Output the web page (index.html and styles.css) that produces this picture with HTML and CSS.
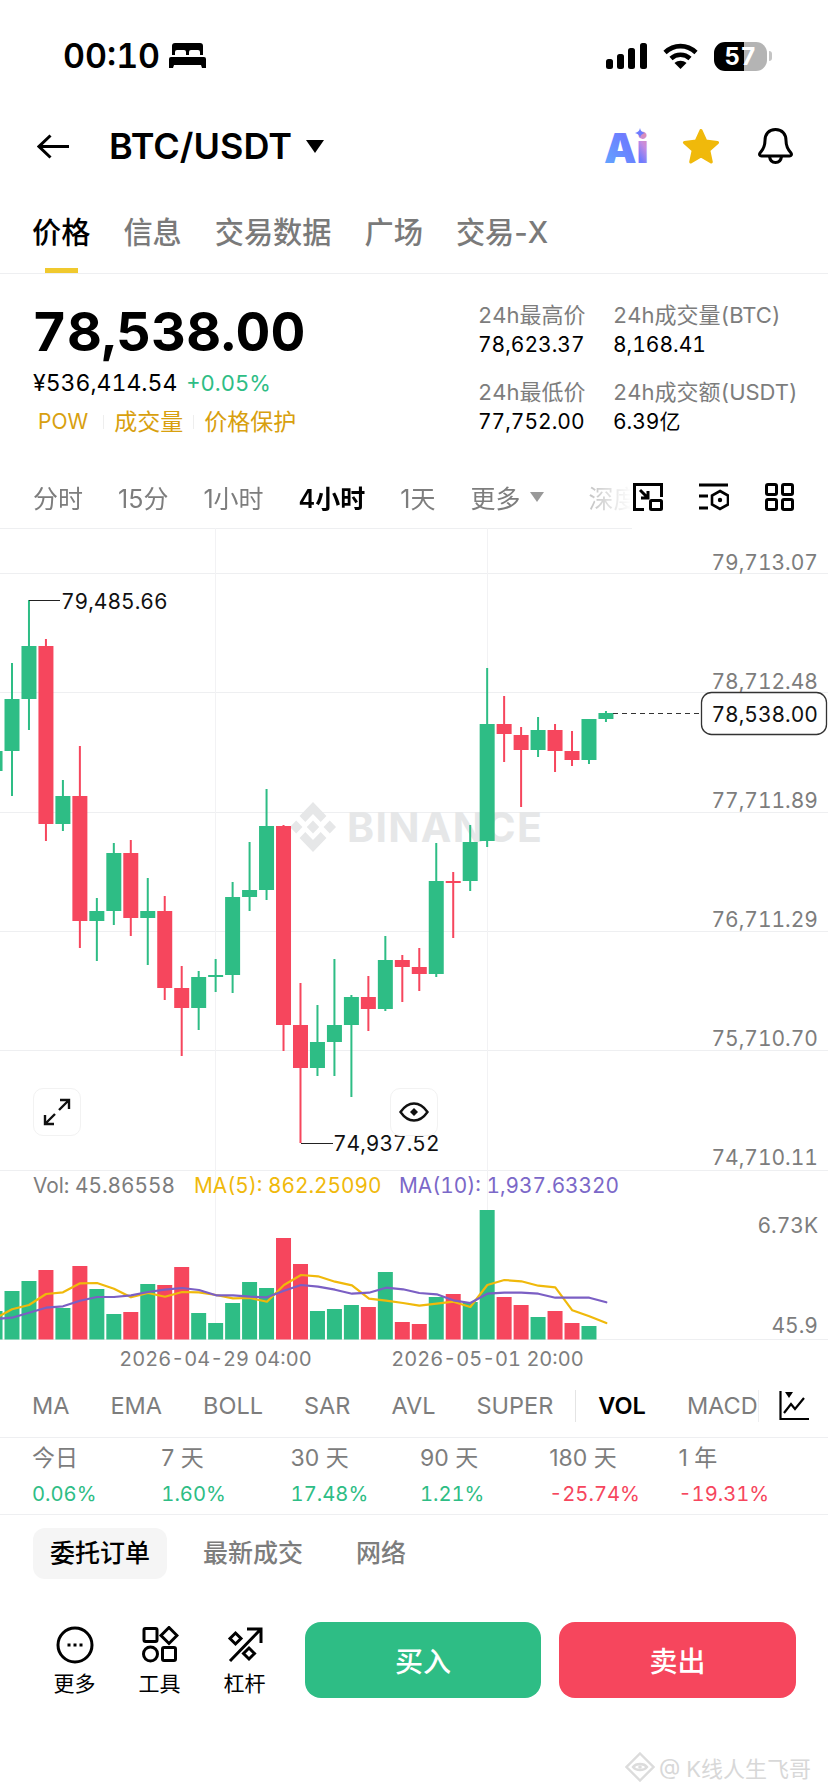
FILE: index.html
```html
<!DOCTYPE html>
<html lang="zh-CN">
<head>
    <meta charset="UTF-8">
    <meta name="viewport" content="width=device-width, initial-scale=1.0">
    <title>BTC/USDT</title>
    <link rel="stylesheet" href="styles.css">
</head>
<body>
<div class="page">

    <!-- 状态栏 -->
    <div class="status">
        <div class="status-left">
            <span class="clock">00:10</span>
            <svg width="37" height="25" viewBox="0 0 37 25"><path fill-rule="evenodd" d="M6 0h25a3 3 0 0 1 3 3v9h-3V9a2 2 0 0 0-2-2h-7a2 2 0 0 0-2 2v3h-3V9a2 2 0 0 0-2-2H8a2 2 0 0 0-2 2v3H3V3a3 3 0 0 1 3-3zM2 14h33a2 2 0 0 1 2 2v9h-4l-1-3H5l-1 3H0v-9a2 2 0 0 1 2-2z"/></svg>
        </div>
        <div class="status-right">
            <svg width="41" height="26" viewBox="0 0 41 26"><rect x="0" y="16" width="7" height="10" rx="2.5"/><rect x="11" y="11" width="7" height="15" rx="2.5"/><rect x="22" y="5" width="7" height="21" rx="2.5"/><rect x="34" y="0" width="7" height="26" rx="2.5"/></svg>
            <svg width="35" height="26" viewBox="0 0 35 26"><path d="M2 9.5C11 1 24 1 33 9.5" fill="none" stroke="#000" stroke-width="4.6"/><path d="M8 15.5c5.500-5 13.500-5 19 0" fill="none" stroke="#000" stroke-width="4.6"/><path d="M11.500 20c3.500-3 8.500-3 12 0l-6 6z"/></svg>
            <div class="battery">
                <span class="battery-num">57</span>
            </div>
            <div class="battery-tip"></div>
        </div>
    </div>

    <!-- 标题栏 -->
    <div class="nav">
        <svg class="back" width="33" height="25" viewBox="0 0 33 25"><path d="M32 12.500H2M13.500 1.500 2 12.500l11.500 11" fill="none" stroke="#000" stroke-width="3"/></svg>
        <span class="pair">BTC/USDT</span>
        <span class="caret"></span>
        <div class="nav-icons">
            <svg class="ai-icon" width="50" height="36" viewBox="0 0 50 36">
                <defs>
                    <linearGradient id="aiGrad" gradientUnits="userSpaceOnUse" x1="0" y1="35" x2="44" y2="5">
                        <stop offset="0" stop-color="#62a6ff"/>
                        <stop offset="0.6" stop-color="#6d7bff"/>
                        <stop offset="0.8" stop-color="#c58ce0"/>
                        <stop offset="1" stop-color="#e8909e"/>
                    </linearGradient>
                </defs>
                <text class="ai-text" x="0" y="35" fill="url(#aiGrad)">Ai</text>
                <path d="M36 0c.6 3 1.800 4.200 5 5-3.200.8-4.400 2-5 5-.6-3-1.800-4.200-5-5 3.200-.8 4.400-2 5-5z" fill="#6d7bff"/>
            </svg>
            <svg width="38" height="35" viewBox="1 1 35 33"><path d="M18.500 2.500 23 12.500l11 1.200-8.200 7.400 2.300 10.900-9.600-5.600-9.600 5.600 2.300-10.900L3 13.700l11-1.200z" fill="#f0b90b" stroke="#f0b90b" stroke-width="3" stroke-linejoin="round"/></svg>
            <svg width="35" height="36" viewBox="0 0 35 36"><path d="M17.500 1.500c-7 0-10.500 5-10.500 11 0 6-1.800 9-5 12.500-1 1.500-.2 3 1.500 3h28c1.700 0 2.500-1.500 1.500-3-3.200-3.500-5-6.500-5-12.500 0-6-3.500-11-10.500-11z" fill="none" stroke="#000" stroke-width="3"/><path d="M11.500 28.500c.5 4 3 6 6 6s5.500-2 6-6" fill="none" stroke="#000" stroke-width="3"/></svg>
        </div>
    </div>

    <!-- 主标签 -->
    <div class="tabs">
        <div class="tab active">价格</div>
        <div class="tab">信息</div>
        <div class="tab">交易数据</div>
        <div class="tab">广场</div>
        <div class="tab">交易-X</div>
    </div>

    <!-- 行情概览 -->
    <div class="summary">
        <div class="summary-left">
            <div class="last-price">78,538.00</div>
            <div class="sub-price"><span>¥536,414.54</span><span class="up">+0.05%</span></div>
            <div class="tags"><span class="tag-pow">POW</span><i></i><span class="tag-vol">成交量</span><i></i><span>价格保护</span></div>
        </div>
        <div class="stats">
            <div class="stat-label">24h最高价</div><div class="stat-label">24h成交量(BTC)</div>
            <div class="stat-value">78,623.37</div><div class="stat-value">8,168.41</div>
            <div class="stat-label stat-gap">24h最低价</div><div class="stat-label stat-gap">24h成交额(USDT)</div>
            <div class="stat-value">77,752.00</div><div class="stat-value">6.39亿</div>
        </div>
    </div>

    <!-- 周期 -->
    <div class="periods">
        <div class="period-list">
            <span>分时</span><span>15分</span><span>1小时</span><span class="active">4小时</span><span>1天</span>
            <span class="more">更多<b></b></span><span class="depth">深度</span>
        </div>
        <div class="period-icons">
            <svg width="30" height="28" viewBox="0 0 30 28" fill="none" stroke="#000" stroke-width="3"><path d="M11 26.500H1.500v-25h27V14"/><path d="M7 7l8 8M15 8v7H8"/><rect x="17.500" y="17.500" width="11" height="9" rx="1"/></svg>
            <svg width="30" height="28" viewBox="0 0 30 28" fill="none" stroke="#000" stroke-width="3"><path d="M0 2h29M0 13h9M0 25h9"/><path d="M21 8l8 4.500v9L21 26l-8-4.500v-9z" stroke-width="2.600"/><circle cx="21" cy="17" r="2.200" fill="#000" stroke="none"/></svg>
            <svg width="29" height="28" viewBox="0 0 29 28" fill="none" stroke="#000" stroke-width="3"><rect x="1.500" y="1.500" width="10" height="10" rx="1.500"/><rect x="17.500" y="1.500" width="10" height="10" rx="1.500"/><rect x="1.500" y="16.500" width="10" height="10" rx="1.500"/><rect x="17.500" y="16.500" width="10" height="10" rx="1.500"/></svg>
        </div>
    </div>

    <!-- K线图 -->
    <div class="chart">
        <svg class="chart-svg" width="828" height="852" viewBox="0 528 828 852">
            <g class="grid">
                <path d="M0 528.500H632M0 573.500H828M0 692.500H828M0 812.500H828M0 931.500H828M0 1050.500H828M0 1170.500H828M0 1339.500H828"/>
                <path class="grid-v" d="M215.500 528V1340M487.500 528V1340"/>
            </g>
            <g class="logo-mark" transform="translate(289 802) scale(.48 .5)">
                <polygon points="50,0 78,28 66,40 50,24 34,40 22,28"/>
                <polygon points="50,100 78,72 66,60 50,76 34,60 22,72"/>
                <polygon points="50,37 63,50 50,63 37,50"/>
                <polygon points="15,37 28,50 15,63 2,50"/>
                <polygon points="85,37 98,50 85,63 72,50"/>
            </g>
            <text class="logo-word" x="347" y="842">BINANCE</text>
            <g id="candles"></g>
            <g id="volumes"></g>
            <g id="ma-lines"></g>

            <path class="marker" d="M29 600.500H60M301 1143.500H333"/>
            <text class="chart-label dark" x="61" y="609">79,485.66</text>
            <text class="chart-label dark" x="333" y="1151">74,937.52</text>

            <g class="chart-label axis">
                <text x="818" y="570">79,713.07</text>
                <text x="818" y="689">78,712.48</text>
                <text x="818" y="808">77,711.89</text>
                <text x="818" y="927">76,711.29</text>
                <text x="818" y="1046">75,710.70</text>
                <text x="818" y="1165">74,710.11</text>
                <text x="818" y="1233">6.73K</text>
                <text x="818" y="1333">45.9</text>
            </g>

            <path class="last-line" d="M613 713.500H701"/>
            <rect class="last-box" x="701.500" y="692.500" width="125" height="42" rx="10"/>
            <text class="chart-label dark" x="818" y="722" text-anchor="end">78,538.00</text>

            <text class="chart-small grey" x="33" y="1193">Vol: 45.86558</text>
            <text class="chart-small yellow" x="194" y="1193">MA(5): 862.25090</text>
            <text class="chart-small purple" x="399" y="1193">MA(10): 1,937.63320</text>

            <text class="chart-date grey" x="215.500" y="1366" text-anchor="middle">2026-04-29 04:00</text>
            <text class="chart-date grey" x="487.500" y="1366" text-anchor="middle">2026-05-01 20:00</text>
        </svg>

        <div class="float-btn btn-expand">
            <svg width="28" height="28" viewBox="0 0 28 28" fill="none" stroke="#111" stroke-width="2.400"><path d="M16 12 26 2M17 2h9v9M12 16 2 26M2 17v9h9"/></svg>
        </div>
        <div class="float-btn btn-eye">
            <svg width="30" height="20" viewBox="0 0 30 20" fill="none" stroke="#111" stroke-width="2.400"><path d="M1.500 10C6 3.500 10 1.500 15 1.500S24 3.500 28.500 10C24 16.500 20 18.500 15 18.500S6 16.500 1.500 10z"/><path d="M15 6l4 4-4 4-4-4z" fill="#111" stroke="none"/></svg>
        </div>
    </div>

    <!-- 指标 -->
    <div class="indicators">
        <div class="ind-list">
            <span>MA</span><span>EMA</span><span>BOLL</span><span>SAR</span><span>AVL</span><span>SUPER</span>
            <i class="ind-sep"></i>
            <span class="active">VOL</span><span class="clip">MACD</span>
        </div>
        <svg class="ind-icon" width="30" height="30" viewBox="0 0 30 30" fill="none" stroke="#000" stroke-width="2.200"><path d="M1.500 0v28h28.500"/><path d="M5 22l7-9 4 5 9-11"/><path d="M6 1h8l-4 6z" fill="#000" stroke="none"/></svg>
    </div>

    <!-- 涨跌幅 -->
    <div class="returns">
        <div class="ret"><div class="ret-label">今日</div><div class="ret-value up">0.06%</div></div>
        <div class="ret"><div class="ret-label">7 天</div><div class="ret-value up">1.60%</div></div>
        <div class="ret"><div class="ret-label">30 天</div><div class="ret-value up">17.48%</div></div>
        <div class="ret"><div class="ret-label">90 天</div><div class="ret-value up">1.21%</div></div>
        <div class="ret"><div class="ret-label">180 天</div><div class="ret-value down">-25.74%</div></div>
        <div class="ret"><div class="ret-label">1 年</div><div class="ret-value down">-19.31%</div></div>
    </div>

    <!-- 委托 -->
    <div class="book-tabs">
        <span class="book-tab active">委托订单</span>
        <span class="book-tab">最新成交</span>
        <span class="book-tab">网络</span>
    </div>

    <!-- 底部操作 -->
    <div class="actions">
        <div class="action">
            <svg width="38" height="38" viewBox="0 0 38 38" fill="none" stroke="#000" stroke-width="3"><circle cx="19" cy="19" r="17"/><path d="M11.500 19h3M17.500 19h3M23.500 19h3"/></svg>
            <span>更多</span>
        </div>
        <div class="action">
            <svg width="38" height="38" viewBox="0 0 38 38" fill="none" stroke="#000" stroke-width="3"><rect x="3" y="2.500" width="13" height="13" rx="1.500"/><path d="M28 1.500l8 8-8 8-8-8z"/><circle cx="9.500" cy="28" r="7"/><rect x="21.500" y="21.500" width="13" height="13" rx="1.500"/></svg>
            <span>工具</span>
        </div>
        <div class="action">
            <svg width="38" height="38" viewBox="0 0 38 38" fill="none" stroke="#000" stroke-width="3"><path d="M4 35 34 4M21 3h14v14"/><path d="M9.500 7l5.500 5.500-5.500 5.500L4 12.500z"/><path d="M23 22l5.500 5.500L23 33l-5.500-5.500z"/></svg>
            <span>杠杆</span>
        </div>
        <button class="trade buy">买入</button>
        <button class="trade sell">卖出</button>
    </div>

    <div class="credit">
        <svg width="30" height="30" viewBox="0 0 30 30" fill="none" stroke="#dcdcdc" stroke-width="2.400"><path d="M15 1.500 28.500 15 15 28.500 1.500 15z"/><path d="M8 15c3-4 11-4 14 0-3 4-11 4-14 0z"/><circle cx="15" cy="15" r="1.800" fill="#dcdcdc" stroke="none"/></svg>
        <span>@ K线人生飞哥</span>
    </div>
</div>
<script src="chart.js"></script>
</body>
</html>
```

FILE: styles.css
```css
* {
    box-sizing: border-box;
}
body {
    margin: 0;
    background-color: #fff;
    color: #000;
    font-family: Inter, "Noto Sans CJK SC", sans-serif;
    font-variant-numeric: tabular-nums;
}
.page {
    position: relative;
    width: 828px;
    height: 1792px;
    overflow: hidden;
}
svg {
    display: block;
    flex: none;
}

/* status bar */
.status {
    height: 100px;
    padding: 42px 56px 0 63px;
    display: flex;
    justify-content: space-between;
    align-items: flex-start;
}
.status-left {
    display: flex;
    align-items: center;
    gap: 9px;
    height: 26px;
}
.clock {
    font-size: 34px;
    font-weight: 600;
}
.status-right {
    display: flex;
    align-items: center;
    gap: 16px;
    height: 26px;
    margin-top: 1px;
}
.battery {
    width: 53px;
    height: 29px;
    border-radius: 11px;
    background: linear-gradient(to right, #000 57%, #b4b4b4 57%);
    display: flex;
    align-items: center;
    justify-content: center;
}
.battery-num {
    color: #fff;
    font-size: 24px;
    font-weight: 700;
    letter-spacing: 0.5px;
}
.battery-tip {
    width: 3px;
    height: 10px;
    margin-left: -14px;
    border-radius: 0 3px 3px 0;
    background-color: #c4c4c4;
}

/* nav */
.nav {
    height: 92px;
    padding: 0 35px 0 37px;
    display: flex;
    align-items: center;
}
.back {
    margin-right: 39px;
}
.pair {
    font-size: 36px;
    font-weight: 600;
}
.caret {
    margin: 0 0 0 14px;
    width: 0;
    height: 0;
    border-left: 9px solid transparent;
    border-right: 9px solid transparent;
    border-top: 13px solid #000;
}
.nav-icons {
    margin-left: auto;
    display: flex;
    align-items: center;
    gap: 38px;
}
.ai-icon {
    margin-right: -10px;
}
.ai-text {
    font-size: 41px;
    font-weight: 900;
}

/* tabs */
.tabs {
    height: 82px;
    padding-left: 32px;
    display: flex;
    gap: 33px;
    border-bottom: 1px solid #eeeff1;
    font-size: 29.200px;
    font-weight: 500;
    font-variant-numeric: normal;
    color: #7a7a7a;
}
.tab {
    position: relative;
    padding-top: 21px;
    line-height: 40px;
}
.tab.active {
    color: #000;
}
.tab.active::after {
    content: "";
    position: absolute;
    left: 13px;
    bottom: 0;
    width: 33px;
    height: 5px;
    background-color: #f0c92e;
}

/* summary */
.summary {
    height: 196px;
    padding-left: 33px;
    display: flex;
}
.summary-left {
    width: 445px;
    padding-top: 28px;
}
.last-price {
    margin-left: -1px;
    font-size: 54px;
    font-weight: 700;
    line-height: 60px;
}
.sub-price {
    margin-top: 6px;
    display: flex;
    align-items: baseline;
    gap: 9px;
    font-size: 23px;
    line-height: 30px;
}
.sub-price .up {
    font-size: 22px;
}
.up {
    color: #2ebd85;
}
.down {
    color: #f6465d;
}
.tags {
    margin-top: 9px;
    padding-left: 5px;
    display: flex;
    align-items: center;
    font-size: 23px;
    line-height: 30px;
    color: #d8a00e;
}
.tags i {
    width: 1px;
    height: 14px;
    margin: 0 10px;
    background-color: #eee;
}
.tag-pow {
    font-size: 21px;
    padding-right: 5px;
}
.stats {
    padding-top: 26px;
    display: grid;
    grid-template-columns: 135px auto;
    grid-auto-rows: auto;
    justify-content: start;
    align-content: start;
    font-size: 21px;
    line-height: 30px;
}
.stat-label {
    color: #7d7d7d;
    font-size: 22px;
}
.stat-gap {
    margin-top: 17px;
}

/* periods */
.periods {
    height: 58px;
    display: flex;
    align-items: center;
    justify-content: space-between;
    padding: 0 34px 4px 33px;
}
.period-list {
    width: 599px;
    display: flex;
    gap: 35px;
    overflow: hidden;
    white-space: nowrap;
    font-size: 25px;
    font-variant-numeric: normal;
    color: #7d7d7d;
    -webkit-mask-image: linear-gradient(to right, #000 92%, transparent);
    mask-image: linear-gradient(to right, #000 92%, transparent);
}
.period-list .active {
    color: #000;
    font-weight: 600;
}
.more {
    display: flex;
    align-items: center;
    gap: 10px;
}
.more b {
    width: 0;
    height: 0;
    border-left: 7px solid transparent;
    border-right: 7px solid transparent;
    border-top: 10px solid #999;
}
.depth {
    margin-left: 9px;
    color: #bdbdbd;
}
.period-icons {
    display: flex;
    gap: 36px;
}

/* chart */
.chart {
    position: relative;
    height: 852px;
}
.chart-svg {
    position: absolute;
    left: 0;
    top: 0;
}
.grid path {
    fill: none;
    stroke: #eeeff1;
    stroke-width: 1;
}
.grid .grid-v {
    stroke: #f2f2f4;
}
.logo-mark {
    fill: #e6e7e8;
}
.logo-word {
    fill: #e6e7e8;
    font-size: 41px;
    font-weight: 700;
    letter-spacing: 1.300px;
}
.marker {
    fill: none;
    stroke: #222;
    stroke-width: 1.200;
}
.chart-label {
    font-size: 21px;
}
.chart-label.dark {
    fill: #111;
}
.chart-label.axis {
    fill: #7d7d7d;
    text-anchor: end;
}
.last-line {
    fill: none;
    stroke: #333;
    stroke-width: 1;
    stroke-dasharray: 5 4;
}
.last-box {
    fill: #fff;
    stroke: #333;
    stroke-width: 1.300;
}
.chart-small {
    font-size: 20.800px;
}
.chart-date {
    font-size: 20px;
}
.grey {
    fill: #7d7d7d;
}
.yellow {
    fill: #f0b90b;
}
.purple {
    fill: #7b68c8;
}
.ma {
    fill: none;
    stroke-width: 2.200;
    stroke-linejoin: round;
    stroke-linecap: round;
}
.ma-yellow {
    stroke: #f0b90b;
}
.ma-purple {
    stroke: #7b5fc4;
}
.float-btn {
    position: absolute;
    top: 560px;
    width: 48px;
    height: 48px;
    border: 1.500px solid #f2f2f2;
    border-radius: 10px;
    background-color: #fff;
    display: flex;
    align-items: center;
    justify-content: center;
}
.btn-expand {
    left: 33px;
}
.btn-eye {
    left: 390px;
}

/* indicators */
.indicators {
    height: 58px;
    padding: 0 0 6px 32px;
    display: flex;
    align-items: center;
    border-bottom: 1px solid #eeeff1;
}
.ind-list {
    width: 727px;
    height: 32px;
    display: flex;
    align-items: center;
    gap: 41px;
    overflow: hidden;
    font-size: 23.500px;
    color: #7d7d7d;
    border-right: 1px solid #eeeff1;
}
.ind-list .active {
    color: #000;
    font-weight: 600;
}
.ind-sep {
    flex: none;
    width: 1px;
    height: 32px;
    margin: 0 -19px;
    background-color: #e4e4e4;
}
.ind-icon {
    margin-left: 20px;
}

/* returns */
.returns {
    height: 77px;
    padding-left: 32px;
    display: grid;
    grid-template-columns: repeat(6, 129.300px);
    border-bottom: 1px solid #eeeff1;
}
.ret-label {
    margin-top: 5px;
    font-size: 23px;
    font-variant-numeric: normal;
    line-height: 30px;
    color: #7d7d7d;
}
.ret-value {
    margin-top: 8px;
    font-size: 20.200px;
    line-height: 26px;
}

/* order book tabs */
.book-tabs {
    height: 76px;
    padding: 13px 0 0 33px;
    display: flex;
    align-items: flex-start;
    gap: 19px;
}
.book-tab {
    height: 51px;
    padding: 0 17px;
    border-radius: 12px;
    font-size: 25px;
    font-weight: 500;
    line-height: 50px;
    color: #7d7d7d;
}
.book-tab.active {
    background-color: #f5f5f5;
    color: #000;
}

/* bottom actions */
.actions {
    margin-top: 31px;
    display: flex;
    align-items: center;
}
.action {
    width: 85px;
    padding-top: 3px;
    display: flex;
    flex-direction: column;
    align-items: center;
    gap: 7px;
    font-size: 21px;
    line-height: 26px;
}
.action:first-child {
    margin-left: 32px;
}
.trade {
    width: 236px;
    height: 76px;
    border: none;
    border-radius: 16px;
    color: #fff;
    font-family: inherit;
    font-size: 28px;
    font-weight: 500;
}
.buy {
    margin-left: 18px;
    background-color: #2ebd85;
}
.sell {
    width: 237px;
    margin-left: 18px;
    background-color: #f6465d;
}
.credit {
    position: absolute;
    left: 625px;
    top: 1751px;
    display: flex;
    align-items: center;
    gap: 4px;
    white-space: nowrap;
    font-size: 22px;
    color: #d8d8d8;
}
```

FILE: chart.js
```js
// 蜡烛数据: [序号, 最高点y, 实体上y, 实体下y, 最低点y, 涨跌], 页面坐标
const candles = [
    [-1, 740, 751, 771, 772, 1],
    [0, 663, 699, 751, 796, 1],
    [1, 600, 646, 699, 730, 1],
    [2, 639, 646, 824, 841, 0],
    [3, 780, 796, 824, 831, 1],
    [4, 746, 796, 921, 948, 0],
    [5, 898, 911, 921, 961, 1],
    [6, 843, 853, 911, 925, 1],
    [7, 840, 853, 918, 936, 0],
    [8, 878, 911, 918, 965, 1],
    [9, 896, 911, 988, 1000, 0],
    [10, 966, 988, 1008, 1056, 0],
    [11, 971, 977, 1008, 1030, 1],
    [12, 959, 975, 977, 992, 1],
    [13, 882, 897, 975, 993, 1],
    [14, 842, 890, 897, 911, 1],
    [15, 789, 826, 890, 900, 1],
    [16, 825, 826, 1025, 1051, 0],
    [17, 983, 1025, 1068, 1143, 0],
    [18, 1005, 1042, 1068, 1076, 1],
    [19, 959, 1025, 1042, 1076, 1],
    [20, 995, 997, 1025, 1097, 1],
    [21, 976, 997, 1009, 1031, 0],
    [22, 936, 960, 1009, 1011, 1],
    [23, 955, 960, 967, 1002, 0],
    [24, 948, 967, 974, 991, 0],
    [25, 843, 881, 974, 977, 1],
    [26, 872, 881, 883, 938, 0],
    [27, 825, 842, 881, 891, 1],
    [28, 668, 724, 841, 847, 1],
    [29, 696, 724, 734, 762, 0],
    [30, 727, 735, 750, 807, 0],
    [31, 717, 730, 750, 757, 1],
    [32, 724, 730, 751, 772, 0],
    [33, 731, 751, 760, 766, 0],
    [34, 719, 719, 760, 764, 1],
    [35, 711, 713, 719, 722, 1]
];

// 成交量柱顶部y, 从序号-1开始
const volumeTops = [1311, 1291, 1281, 1270, 1308, 1266, 1289, 1314, 1312, 1284, 1285, 1267,
    1313, 1323, 1303, 1282, 1288, 1238, 1264, 1311, 1309, 1305, 1307, 1272, 1322, 1324,
    1297, 1294, 1302, 1210, 1297, 1305, 1317, 1311, 1323, 1326];

// 均线点 (放大3倍后量到的坐标)
const yellowLine = [[0, 497], [36, 478], [87, 465], [138, 432], [189, 427], [240, 400], [291, 399],
    [342, 416], [393, 442], [444, 429], [495, 440], [546, 426], [597, 427], [648, 435], [699, 445],
    [750, 444], [801, 455], [852, 405], [903, 375], [954, 379], [1005, 395], [1056, 406], [1107, 446],
    [1158, 452], [1209, 459], [1258, 467], [1310, 461], [1360, 455], [1411, 471], [1462, 405],
    [1513, 390], [1564, 394], [1615, 407], [1666, 412], [1717, 481], [1768, 499], [1819, 519]];
const purpleLine = [[0, 506], [36, 503], [87, 488], [138, 473], [189, 469], [240, 452], [291, 441],
    [342, 441], [393, 436], [444, 426], [495, 419], [546, 414], [597, 420], [648, 436], [699, 436],
    [750, 440], [801, 442], [852, 422], [903, 405], [954, 410], [1005, 419], [1056, 431], [1107, 428],
    [1158, 413], [1209, 418], [1258, 429], [1310, 433], [1360, 451], [1411, 459], [1462, 431],
    [1513, 428], [1564, 428], [1615, 431], [1666, 443], [1717, 443], [1768, 443], [1819, 457]];

const GREEN = "#2ebd85";
const RED = "#f6465d";
const SVG_NS = "http://www.w3.org/2000/svg";

function el(name, attrs, parent) {
    const node = document.createElementNS(SVG_NS, name);
    for (const key in attrs) {
        node.setAttribute(key, attrs[key]);
    }
    parent.appendChild(node);
    return node;
}

function centerX(i) {
    return 12 + 16.97 * i;
}

const candleGroup = document.getElementById("candles");
const volumeGroup = document.getElementById("volumes");
const lineGroup = document.getElementById("ma-lines");

candles.forEach(function (c) {
    const x = centerX(c[0]);
    const color = c[5] ? GREEN : RED;
    el("rect", { x: x - 1, y: c[1], width: 2, height: c[4] - c[1], fill: color }, candleGroup);
    el("rect", { x: x - 7.5, y: c[2], width: 15, height: c[3] - c[2], fill: color }, candleGroup);
});

volumeTops.forEach(function (top, n) {
    const c = candles[n];
    const x = centerX(c[0]);
    el("rect", {
        x: x - 7.5,
        y: top,
        width: 15,
        height: 1339.5 - top,
        fill: c[5] ? GREEN : RED
    }, volumeGroup);
});

function drawLine(points, cls) {
    const text = points.map(function (p) {
        return (p[0] / 3).toFixed(1) + "," + (1150 + p[1] / 3).toFixed(1);
    }).join(" ");
    el("polyline", { points: text, class: "ma " + cls }, lineGroup);
}

drawLine(yellowLine, "ma-yellow");
drawLine(purpleLine, "ma-purple");
```
